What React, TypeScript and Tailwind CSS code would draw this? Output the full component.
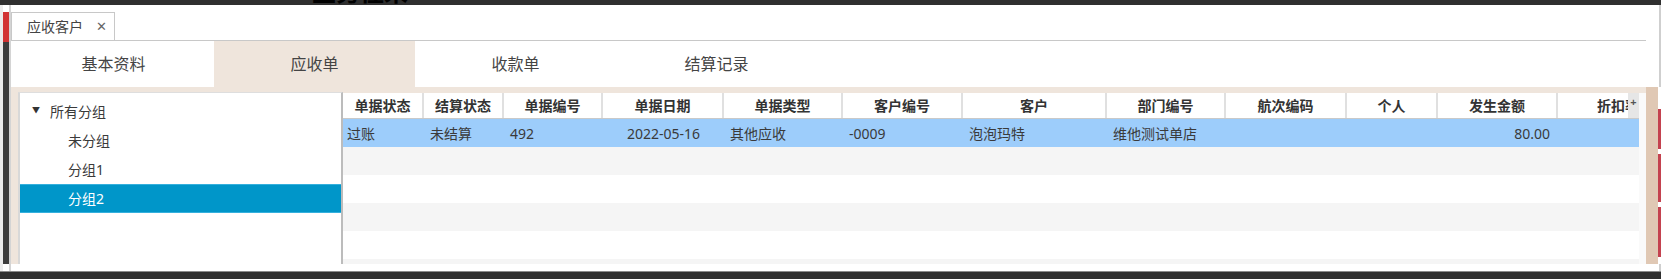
import React from 'react';

const columns = [
  { title: '单据状态', w: 81 },
  { title: '结算状态', w: 80 },
  { title: '单据编号', w: 99 },
  { title: '单据日期', w: 121 },
  { title: '单据类型', w: 119 },
  { title: '客户编号', w: 120 },
  { title: '客户', w: 144 },
  { title: '部门编号', w: 119 },
  { title: '航次编码', w: 121 },
  { title: '个人', w: 91 },
  { title: '发生金额', w: 120 },
];

const row = ['过账', '未结算', '492', '2022-05-16', '其他应收', '-0009', '泡泡玛特', '维他测试单店', '', '', '80.00'];

const navTabs = ['基本资料', '应收单', '收款单', '结算记录'];

const App: React.FC = () => {
  return (
    <div className="w-[1661px] h-[279px] bg-[#2f2f2f] flex flex-col overflow-hidden font-['Noto_Sans','Noto_Sans_CJK_SC',sans-serif] text-[#3a3a3a]">
      {/* clipped title from the page above */}
      <div className="h-[5px] overflow-hidden pl-[312px]">
        <div className="-mt-[21px] text-[24px] font-bold leading-[26px] text-black">业务往来</div>
      </div>

      <div className="h-[266px] bg-white flex">
        {/* left window strip */}
        <div className="w-[3px] bg-[#ececec]"></div>
        <div className="w-[6px] flex flex-col pt-[7px] bg-white">
          <div className="h-[30px] bg-[#d23434]"></div>
          <div className="flex-1 bg-[#3d3d3d] mb-[7px]"></div>
        </div>
        <div className="w-[2px] bg-[#d4d4d4]"></div>

        <div className="flex-1 flex flex-col">
          {/* document tab strip */}
          <div className="h-[36px] flex items-end border-b border-[#c8c8c8]">
            <div className="h-[28px] w-[104px] border border-b-0 border-[#c8c8c8] bg-white flex items-center pl-[15px] gap-[13px] text-[14px] text-[#444]">
              <span>应收客户</span>
              <span className="text-[13px] text-[#666]">✕</span>
            </div>
          </div>

          {/* nav tabs */}
          <div className="h-[46px] flex pl-[2px]">
            {navTabs.map((t, i) => (
              <div
                key={t}
                className={`w-[201px] flex items-center justify-center text-[16px] text-[#444] ${i === 1 ? 'bg-[#efe5dc]' : 'bg-white'}`}
              >
                {t}
              </div>
            ))}
          </div>

          {/* content */}
          <div className="h-[177px] bg-[#efe5dc] flex pl-[7px] pt-[5px]">
            {/* group tree */}
            <div className="w-[325px] bg-white border-l-2 border-r-2 border-l-[#d8d8d8] border-r-[#bcbcbc] border-t border-t-[#dedede] pt-[4px] text-[14px]">
              <div className="h-[29px] flex items-center pl-[12px]">
                <span className="text-[8px] text-[#333] w-[18px] -mt-[4px]">▼</span>
                <span>所有分组</span>
              </div>
              <div className="h-[29px] flex items-center pl-[48px]">未分组</div>
              <div className="h-[29px] flex items-center pl-[48px]">分组1</div>
              <div className="h-[29px] flex items-center pl-[48px] bg-[#0096c9] text-white border-y border-[#35b0dd]">分组2</div>
            </div>

            {/* grid */}
            <div className="flex-1 bg-white mt-[1px] flex">
              <div className="w-[1296px] flex flex-col overflow-hidden">
                <div className="h-[26px] flex border-b border-[#c9c9c9] shrink-0">
                  {columns.map((c) => (
                    <div
                      key={c.title}
                      style={{ width: c.w }}
                      className="shrink-0 h-full flex items-center justify-center text-[14px] font-bold text-[#333] border-r-2 border-[#e0e0e0] whitespace-nowrap"
                    >
                      {c.title}
                    </div>
                  ))}
                  <div className="w-[70px] shrink-0 h-full overflow-hidden flex items-center pl-[39px] text-[14px] font-bold text-[#333] whitespace-nowrap">
                    折扣率
                  </div>
                  <div className="w-[11px] shrink-0 h-[25px] bg-[#e6e6e6] flex items-start justify-center text-[11px] font-bold leading-[18px] text-[#555]">+</div>
                </div>
                <div className="h-[28px] flex bg-[#9dcdfb] shrink-0">
                  {columns.map((c, i) => (
                    <div
                      key={c.title}
                      style={{ width: c.w }}
                      className={`shrink-0 flex items-center text-[14px] text-[#3a3a3a] whitespace-nowrap ${
                        i === 3 ? 'justify-center' : i === 10 ? 'justify-end pr-[8px]' : i === 0 ? 'pl-[4px]' : 'pl-[6px]'
                      }`}
                    >
                      {row[i]}
                    </div>
                  ))}
                </div>
                <div className="h-[28px] bg-[#f5f5f5] shrink-0"></div>
                <div className="h-[28px] bg-white shrink-0"></div>
                <div className="h-[28px] bg-[#f5f5f5] shrink-0"></div>
                <div className="h-[28px] bg-white shrink-0"></div>
                <div className="h-[28px] bg-[#f5f5f5] shrink-0"></div>
              </div>
              <div className="flex-1 bg-[#fafafa]"></div>
            </div>
          </div>
          <div className="flex-1 bg-white"></div>
        </div>

        {/* right edge */}
        <div className="w-[15px] flex flex-col">
          <div className="h-[82px] flex justify-end">
            <div className="w-[2px] bg-[#cfcfcf]"></div>
          </div>
          <div className="h-[177px] flex">
            <div className="w-[12px] bg-[#e0c8b4]"></div>
            <div className="w-[3px] flex flex-col gap-[5px] pt-[22px]">
              <div className="h-[40px] bg-[#c4424f]"></div>
              <div className="h-[48px] bg-[#c4424f]"></div>
              <div className="h-[50px] bg-[#c4424f]"></div>
            </div>
          </div>
          <div className="flex-1 flex justify-end">
            <div className="w-[2px] bg-[#cfcfcf]"></div>
          </div>
        </div>
      </div>
      <div className="h-[1px] bg-[#8a8a8a]"></div>
    </div>
  );
};

export default App;
